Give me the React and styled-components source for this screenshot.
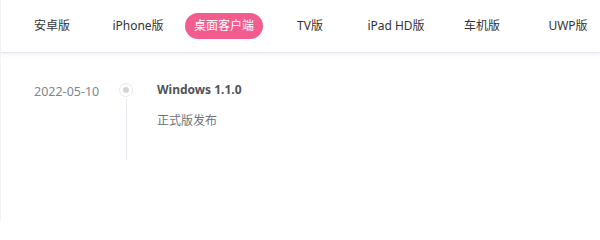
import React from 'react';
import styled, { createGlobalStyle } from 'styled-components';

const GlobalStyle = createGlobalStyle`
  html, body {
    margin: 0;
    padding: 0;
    background: #fff;
  }
  body {
    font-family: "Noto Sans", "Noto Sans CJK SC", sans-serif;
    -webkit-font-smoothing: antialiased;
  }
`

const Page = styled.div`
  width: 600px;
  height: 220px;
  overflow: hidden;
  background: #fff;
  border-left: 1px solid #f1f2f3;
  box-sizing: border-box;
`

const Tabs = styled.nav`
  display: flex;
  align-items: center;
  height: 52px;
  padding-left: 8px;
  border-bottom: 1px solid #e7e9ee;
  box-shadow: 0 2px 3px rgba(230, 232, 240, 0.5);
  white-space: nowrap;
`

const Tab = styled.div`
  flex: 0 0 78px;
  margin: 0 4px;
  height: 26px;
  line-height: 26px;
  border-radius: 13px;
  text-align: center;
  font-size: 12px;
  color: ${(p) => (p.$active ? '#fff' : '#333')};
  background: ${(p) => (p.$active ? '#f25d8e' : 'transparent')};
`

const Timeline = styled.div`
  padding: 27px 0 0 0;
`

const Entry = styled.div`
  display: grid;
  grid-template-columns: 117px 16px 1fr;
`

const Date = styled.div`
  padding: 2px 0 0 33px;
  font-size: 12.5px;
  line-height: 20px;
  color: #7d868c;
`

const Rail = styled.div`
  display: flex;
  flex-direction: column;
  align-items: center;
`

const Dot = styled.div`
  width: 12px;
  height: 12px;
  margin-top: 3px;
  border: 1px solid #e5e9ef;
  border-radius: 50%;
  display: flex;
  align-items: center;
  justify-content: center;
  &::after {
    content: '';
    width: 6px;
    height: 6px;
    border-radius: 50%;
    background: #d0d3d8;
  }
`

const Line = styled.div`
  width: 1px;
  height: 61px;
  margin-top: 2px;
  background: #e5e9ef;
`

const Body = styled.div`
  padding-left: 23px;
`

const Title = styled.div`
  font-size: 12px;
  line-height: 20px;
  font-weight: 700;
  color: #505558;
`

const Desc = styled.div`
  margin-top: 11px;
  font-size: 12px;
  line-height: 20px;
  color: #6d757a;
`

const tabs = ['安卓版', 'iPhone版', '桌面客户端', 'TV版', 'iPad HD版', '车机版', 'UWP版'];

export default function App() {
  return (
    <Page>
      <GlobalStyle />
      <Tabs>
        {tabs.map((t) => (
          <Tab key={t} $active={t === '桌面客户端'}>{t}</Tab>
        ))}
      </Tabs>
      <Timeline>
        <Entry>
          <Date>2022-05-10</Date>
          <Rail>
            <Dot />
            <Line />
          </Rail>
          <Body>
            <Title>Windows 1.1.0</Title>
            <Desc>正式版发布</Desc>
          </Body>
        </Entry>
      </Timeline>
    </Page>
  );
}
